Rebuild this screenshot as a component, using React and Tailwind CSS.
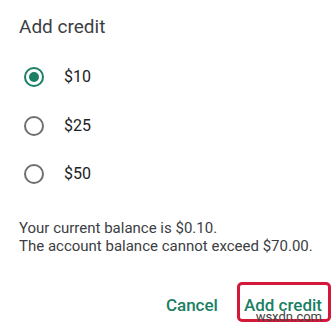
import React, { useState } from 'react'

const options = ['$10', '$25', '$50']

const Radio = ({ checked }) => (
  <span
    className={`flex h-[20px] w-[20px] items-center justify-center rounded-full border-2 ${
      checked ? 'border-[#1a7f64]' : 'border-[#707070]'
    }`}
  >
    {checked && <span className="h-[10px] w-[10px] rounded-full bg-[#1a7f64]" />}
  </span>
)

const App = () => {
  const [amount, setAmount] = useState('$10')

  return (
    <div className="h-[327px] w-[334px] overflow-hidden bg-white font-['Roboto',sans-serif]">
      <div className="px-[19px] pt-[16px]">
        <h2 className="text-[19px] leading-[22px] text-[#3c4043]">Add credit</h2>

        <div className="mt-[29px] flex flex-col gap-[28.5px]">
          {options.map((opt) => (
            <button
              key={opt}
              onClick={() => setAmount(opt)}
              className="flex h-[20px] items-center text-left"
            >
              <span className="ml-[5px]">
                <Radio checked={amount === opt} />
              </span>
              <span className="ml-[20px] text-[16px] text-[#202124]">{opt}</span>
            </button>
          ))}
        </div>

        <p className="mt-[35px] text-[15px] leading-[18px] text-[#3c4043]">
          Your current balance is $0.10.
          <br />
          The account balance cannot exceed $70.00.
        </p>
      </div>

      <div className="relative mt-[38px] flex items-center justify-end gap-[26px] pr-[12px]">
        <button className="text-[17px] font-medium text-[#1a7f64]">Cancel</button>
        <button className="text-[17px] font-medium text-[#1a7f64]">Add credit</button>
        <div className="pointer-events-none absolute right-[3px] top-[-11px] h-[40px] w-[94px] rounded-[5px] border-[3px] border-[#d4183a]" />
        <span className="absolute right-[12px] top-[16px] text-[13px] leading-[16px] text-[#444]">wsxdn.com</span>
      </div>
    </div>
  )
}

export default App
